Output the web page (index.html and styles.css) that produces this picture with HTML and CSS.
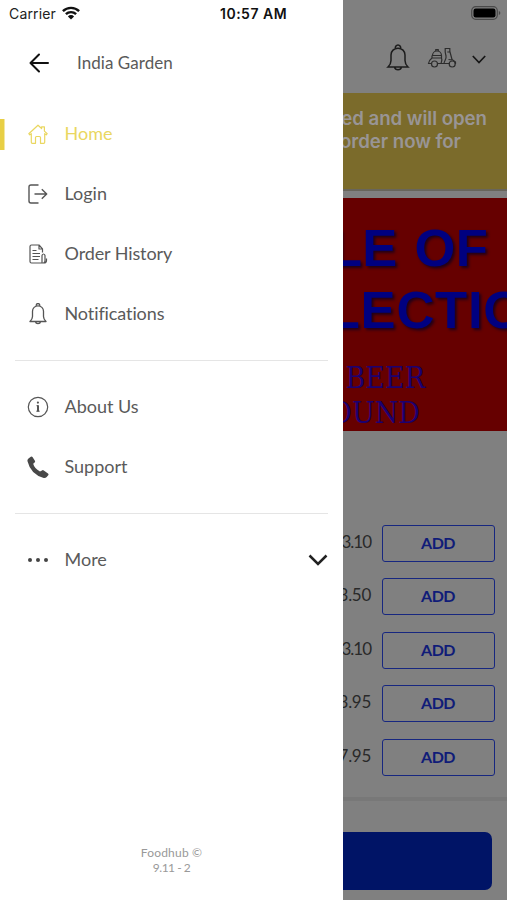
FILE: index.html
```html
<!DOCTYPE html>
<html lang="en">
<head>
<meta charset="utf-8">
<title>India Garden</title>
<link rel="stylesheet" href="styles.css">
</head>
<body>
<div class="screen">
  <aside class="drawer">
    <div class="status">
      <span class="carrier">Carrier</span>
      <svg class="wifi" width="18" height="14" viewBox="0 0 18 14" fill="none" stroke="#111" stroke-width="2.4"><path d="M.9 5.2a11.5 11.5 0 0 1 16.2 0M3.9 8.2a7.2 7.2 0 0 1 10.2 0"/><path d="M9 13.5 5.9 10.4a4.4 4.4 0 0 1 6.2 0z" fill="#111" stroke="none"/></svg>
      <span class="clock">10:57 AM</span>
    </div>
    <header class="title">
      <svg width="20" height="20" viewBox="0 0 20 20" fill="none" stroke="#111" stroke-width="2" stroke-linecap="round" stroke-linejoin="round"><path d="M19 10H2M10 1.5 1.5 10l8.500 8.500"/></svg>
      <span>India Garden</span>
    </header>
    <nav class="menu">
      <a class="item active"><svg width="22" height="22" viewBox="0 0 22 22"><path d="m1.800 10.700 9.200-8.500 3.600 3.300V3.800h2.800v4.300l2.800 2.600-1 1.200-1.500-1.200v8.600q0 1-1 1h-3.200v-5.800q0-1-1-1h-3q-1 0-1 1v5.800H5.300q-1 0-1-1v-8.600l-1.500 1.200z"/></svg><span class="home">Home</span></a>
      <a class="item"><svg width="22" height="22" viewBox="0 0 22 22"><path d="M11.500 2H4Q2 2 2 4v14q0 2 2 2h7.500M7.500 11h12M14.800 6.200l4.900 4.800-4.900 4.800" stroke-width="1.400"/></svg><span class="login">Login</span></a>
      <a class="item"><svg width="22" height="22" viewBox="0 0 22 22"><path d="M15.500 9.500V5.800L12 2H4.500Q3 2 3 3.500v15Q3 20 4.500 20H17q2.500 0 2.500-2.500v-2M12 2v4h3.500M5.500 7.500h4M5.500 10.500h7.500M5.500 13.500h7.500M5.500 16.500h6M15 19.500V13q0-2 1.500-2t1.500 2v4.500q0 2.400-1.500 2.400"/></svg><span class="orders">Order History</span></a>
      <a class="item"><svg width="22" height="22" viewBox="0 0 22 22"><path d="M9.300 2.900a1.800 1.800 0 1 1 3.400 0M3 18.500h16c-2-2-2.500-3-2.500-5V8.300a5.500 5.500 0 0 0-11 0v5.200c0 2-.5 3-2.500 5zM8.300 18.500a2.800 2.800 0 0 0 5.400 0" stroke-width="1.300"/></svg><span class="notes">Notifications</span></a>
      <hr>
      <a class="item"><svg width="22" height="22" viewBox="0 0 22 22"><circle cx="11" cy="11" r="9.700"/><path d="M11 9.200v6.300" stroke-width="2"/><path d="M9.500 9.700H11M9.300 15.200h3.400" stroke-width="1"/><circle cx="10.900" cy="6.600" r="1.100" fill="#555" stroke="none"/></svg><span class="about">About Us</span></a>
      <a class="item"><svg width="22" height="22" viewBox="0 0 22 22"><path d="M1.500 2.400 3.800.7q1-.6 1.700.4l2.400 3.600q.6 1-.3 1.800L6.200 7.800q1 4.400 6.800 7.800l2-1.200q1-.6 1.800.1l4.200 3.100q.9.800.2 1.700l-1.500 1.800q-1.200 1.100-3 .8Q3.600 18.200.5 5.200q-.4-1.700 1-2.800z" fill="#484848" stroke="none"/></svg><span class="support">Support</span></a>
      <hr>
      <a class="item"><svg width="22" height="22" viewBox="0 0 22 22"><g fill="#444" stroke="none"><circle cx="3" cy="11" r="2"/><circle cx="11" cy="11" r="2"/><circle cx="19" cy="11" r="2"/></g></svg><span class="more">More</span><svg class="chev" width="20" height="12" viewBox="0 0 20 12"><path d="m1.500 1.500 8.500 8.500 8.500-8.500" stroke="#222" stroke-width="2.500"/></svg></a>
    </nav>
    <footer class="version"><span>Foodhub ©</span><span class="num">9.11 - 2</span></footer>
  </aside>
  <main class="page">
    <div class="topbar">
      <svg class="battery" width="30" height="14" viewBox="0 0 30 14"><rect x=".7" y=".7" width="25.600" height="12.600" rx="4" fill="none" stroke="#4a4a4a" stroke-width="1.200"/><rect x="2.500" y="2.500" width="22" height="9" rx="2.200"/><path d="M27.800 5v4q1.600-.7 1.600-2t-1.600-2z" fill="#4a4a4a"/></svg>
      <div class="tools">
        <svg width="24" height="28" viewBox="0 0 24 28" fill="none" stroke="#1c1c1c" stroke-width="1.500"><path d="M9.500 4.800a2.700 2.700 0 1 1 5 0M2 23h20c-2.400-2.300-3-3.800-3-6.500V11c0-4-3-6.800-7-6.800S5 7 5 11v5.500C5 19.200 4.400 20.700 2 23zM8.500 23a3.600 3.600 0 0 0 7 0"/></svg>
        <svg class="scooter" width="30" height="22" viewBox="0 0 30 22" fill="none" stroke="#2c2c2c" stroke-width="1.200"><path d="M5.500 8.500a4.500 4.500 0 0 1 9 0zM8.800 4V2.500h2.400V4M5 8.500v2.500h9.500V8.500M5 11c-2 1.500-3.200 3-3.500 5.500h3M10.500 16.500h12M14.500 11c1 2 0 3.500-.5 5.500M17 16.500c0-2.500 2.800-4.500 2-7.500l-.8-4V1.500h4.600V5h-2.500M23 5l2 7.500 3.500 2.500v2M21.500 12.500l3.500.5"/><circle cx="7.500" cy="17" r="3"/><circle cx="25.200" cy="17" r="3"/></svg>
        <svg class="down" width="14" height="9" viewBox="0 0 14 9" fill="none" stroke="#161616" stroke-width="1.700"><path d="m.8 1 6.200 6.500L13.200 1"/></svg>
      </div>
    </div>
    <div class="banner"><p class="b1">ed and will open</p><p class="b2">order now for</p></div>
    <section class="promo">
      <p class="big p1">LE OF</p>
      <p class="big p2">LECTIO</p>
      <p class="small s1">BEER</p>
      <p class="small s2">OUND</p>
    </section>
    <ul class="prices">
      <li><span class="tight">3.10</span><button>ADD</button></li>
      <li><span>3.50</span><button>ADD</button></li>
      <li><span class="tight">3.10</span><button>ADD</button></li>
      <li><span>3.95</span><button>ADD</button></li>
      <li><span>7.95</span><button>ADD</button></li>
    </ul>
    <div class="basket"><div class="cta"></div></div>
  </main>
</div>
</body>
</html>
```
FILE: styles.css
```css
* { box-sizing: border-box; }
body, p, ul { margin: 0; padding: 0; }
body { font-family: Lato, "Liberation Sans", sans-serif; color: #5a5a5a; }
.screen { display: flex; width: 507px; height: 900px; overflow: hidden; }

.drawer { flex: none; width: 343px; background: #fff; display: flex; flex-direction: column; }
.status { height: 28px; padding-left: 9px; display: flex; align-items: center; font-family: Inter, sans-serif; font-size: 14px; color: #222; }
.carrier { width: 47px; letter-spacing: .15px; margin-top: -1px; }
.wifi { margin: -3px 0 0 6px; }
.clock { margin: -1px 0 0 140px; font-weight: 600; white-space: nowrap; color: #111; letter-spacing: .5px; }
.title { height: 70px; display: flex; align-items: center; padding-left: 29px; gap: 28px; font-size: 17px; letter-spacing: .05px; }
.title span { margin-top: -1px; }
.menu { padding-top: 6px; flex: 1; }
.item { height: 60px; display: flex; align-items: center; padding-left: 27px; font-size: 18px; gap: 15.500px; letter-spacing: 0; }
.item span { margin-top: -2px; }
.orders, .notes { letter-spacing: -.1px; }
.item svg { fill: none; stroke: #555; stroke-width: 1.2; stroke-linejoin: round; flex: none; }
.item.active { color: #ead760; background: linear-gradient(#e8cf45, #e8cf45) 0 15px / 4.500px 31px no-repeat; }
.item.active svg { stroke: #ead760; }
.item .chev { margin: 0 15px 0 auto; stroke-linejoin: miter; }
hr { border: 0; height: 1px; margin: 16px 15px; background: #e5e5e5; }
.version { display: flex; flex-direction: column; align-items: center; font-size: 12px; line-height: 15px; color: #999; padding-bottom: 25px; letter-spacing: .2px; }
.num { letter-spacing: -.5px; }

.page { flex: none; width: 164px; background: #808080; overflow: hidden; display: flex; flex-direction: column; }
.topbar { height: 93px; flex: none; display: flex; flex-direction: column; align-items: flex-end; padding: 6px 6px 0 0; }
.tools { display: flex; align-items: center; margin-top: 24px; padding-right: 15px; }
.scooter { margin: 0 15px 0 17px; }
.down { margin-top: 2px; }
.banner { flex: none; height: 98px; padding: 14px 20px 0 0; background: #7b6b2b; color: #999595; font-family: Inter, sans-serif; font-size: 18.700px; font-weight: 600; line-height: 23px; letter-spacing: -.05px; border-bottom: 2px solid #68655b; }
.banner p, .promo p { display: flex; justify-content: flex-end; white-space: nowrap; }
.banner .b2 { padding-right: 26px; }
.promo { flex: none; height: 233px; margin-top: 7px; padding-top: 19px; background: #600; color: #000080; }
.big { font: bold 52.500px/62px "Liberation Sans", sans-serif; letter-spacing: .3px; text-shadow: 2px 2px 3px #200018; }
.promo .p1 { padding-right: 19px; word-spacing: 2px; }
.promo .p2 { margin-right: -18px; letter-spacing: .8px; }
.small { font: 30px/35px "DejaVu Serif Condensed", "DejaVu Serif", serif; font-stretch: condensed; color: #1c0070; }
.promo .s1 { padding-right: 82px; margin-top: 19px; }
.promo .s2 { padding-right: 87px; }
.prices { list-style: none; padding: 94px 12px 0 0; height: 366px; flex: none; display: flex; flex-direction: column; gap: 16.400px; }
.prices li { display: flex; justify-content: flex-end; align-items: center; gap: 11px; height: 37px; font-size: 17px; letter-spacing: -.3px; color: #292929; }
.prices span { margin-top: -4px; }
.prices .tight { letter-spacing: -1px; }
.prices button { flex: none; width: 113px; height: 37px; border: 1.500px solid #172780; border-radius: 3px; background: none; color: #101c78; font: bold 16px Lato, sans-serif; letter-spacing: -.5px; padding: 0 1px 2px 0; }
.basket { flex: 1; border-top: 4px solid #787878; padding: 31px 15px 0 0; }
.cta { height: 58px; background: #001466; border-radius: 0 7px 7px 0; }
```
